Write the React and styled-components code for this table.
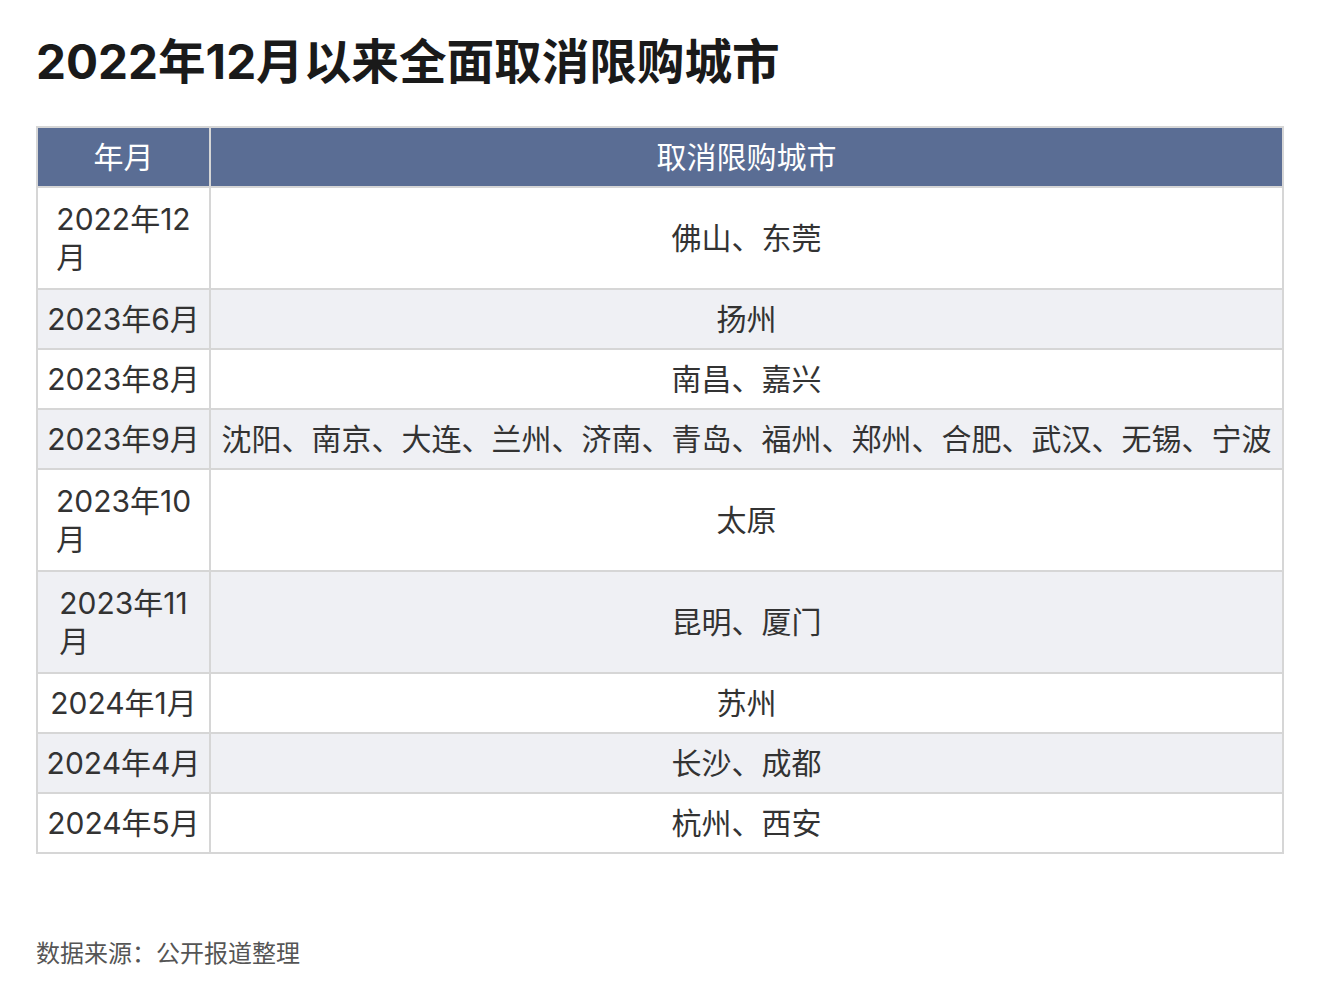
import React from "react";
import styled, { createGlobalStyle } from "styled-components";

const GlobalStyle = createGlobalStyle`
  html, body {
    margin: 0;
    padding: 0;
    background: #ffffff;
  }
  body {
    font-family: Inter, "Noto Sans CJK SC", "Noto Sans", sans-serif;
    color: #333333;
  }
`;

const Page = styled.div`
  width: 1320px;
  height: 1000px;
  box-sizing: border-box;
  padding: 28px 36px 0 36px;
  display: flex;
  flex-direction: column;
`;

const Title = styled.h1`
  margin: 0;
  font-size: 47.6px;
  font-weight: 700;
  line-height: 68px;
  color: #1a1a1a;
`;

const Table = styled.table`
  margin-top: 30px;
  width: 1248px;
  border-collapse: collapse;
  border: 2px solid #d6d6d6;
  font-size: 30px;
`;

const HeadCell = styled.th`
  background: #5a6d94;
  color: #ffffff;
  font-weight: 400;
  height: 58px;
  padding: 0 8px;
  border: 2px solid #d6d6d6;
  text-align: center;
  line-height: 40px;
  width: ${({ w }) => w || "auto"};
`;

const Row = styled.tr`
  background: ${({ alt }) => (alt ? "#eff0f4" : "#ffffff")};
`;

const Cell = styled.td`
  border: 2px solid #d6d6d6;
  padding: 0 8px;
  text-align: center;
  color: #333333;
  white-space: nowrap;
  line-height: 38px;
`;

const DateText = styled.div`
  display: inline-block;
  text-align: left;
  padding: ${({ wrap }) => (wrap ? "12px 0" : "10px 0")};
`;

const Source = styled.div`
  margin-top: 82px;
  font-size: 24px;
  line-height: 36px;
  color: #555555;
`;

const rows = [
  ["2022年12", "月", "佛山、东莞"],
  ["2023年6月", null, "扬州"],
  ["2023年8月", null, "南昌、嘉兴"],
  ["2023年9月", null, "沈阳、南京、大连、兰州、济南、青岛、福州、郑州、合肥、武汉、无锡、宁波"],
  ["2023年10", "月", "太原"],
  ["2023年11", "月", "昆明、厦门"],
  ["2024年1月", null, "苏州"],
  ["2024年4月", null, "长沙、成都"],
  ["2024年5月", null, "杭州、西安"],
];

const App = () => (
  <>
    <GlobalStyle />
    <Page>
      <Title>2022年12月以来全面取消限购城市</Title>
      <Table>
        <thead>
          <tr>
            <HeadCell w="155px">年月</HeadCell>
            <HeadCell>取消限购城市</HeadCell>
          </tr>
        </thead>
        <tbody>
          {rows.map(([date, rest, cities], i) => (
            <Row key={date} alt={i % 2 === 1}>
              <Cell>
                <DateText wrap={!!rest}>
                  {date}
                  {rest && (
                    <>
                      <br />
                      {rest}
                    </>
                  )}
                </DateText>
              </Cell>
              <Cell>{cities}</Cell>
            </Row>
          ))}
        </tbody>
      </Table>
      <Source>数据来源：公开报道整理</Source>
    </Page>
  </>
);

export default App;
